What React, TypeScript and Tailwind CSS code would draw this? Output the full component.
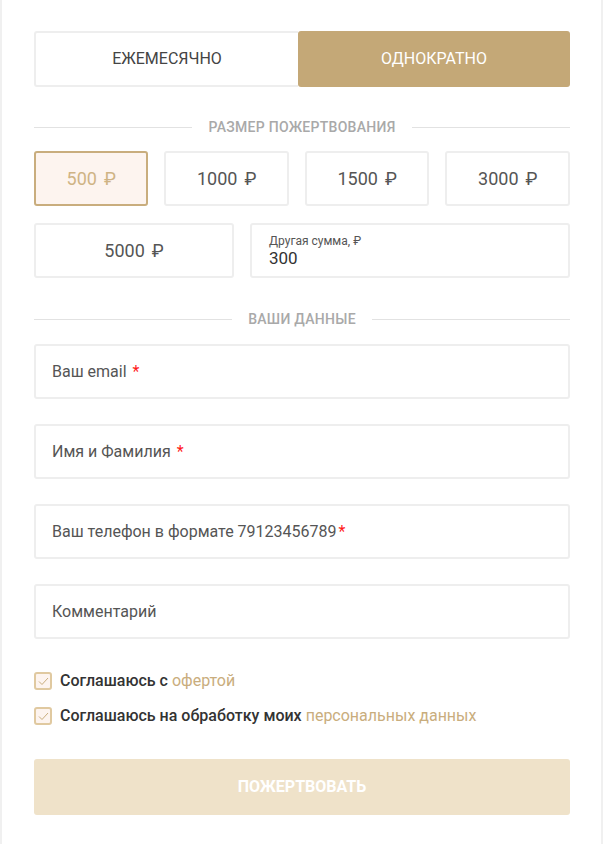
import { useState } from 'react'

function Divider({ label }: { label: string }) {
  return (
    <div className="flex h-5 items-center gap-4">
      <div className="h-px flex-1 bg-[#e2e2e2]" />
      <span className="text-[14px] font-medium uppercase leading-5 tracking-[0.02em] text-[#a9a9a9]">
        {label}
      </span>
      <div className="h-px flex-1 bg-[#e2e2e2]" />
    </div>
  )
}

function Field({ label, required, tight }: { label: string; required?: boolean; tight?: boolean }) {
  return (
    <div className="flex h-[55px] items-center rounded-[3px] border-2 border-[#eeeeee] bg-white px-4 text-[16px] text-[#555]">
      <span>{label}</span>
      {required && (
        <span className={tight ? 'ml-[2px] text-[#ff1a1a]' : 'ml-[6px] text-[#ff1a1a]'}>*</span>
      )}
    </div>
  )
}

function Check({ children }: { children: React.ReactNode }) {
  return (
    <label className="flex h-6 items-center gap-2 text-[16px] font-medium leading-6 text-[#333]">
      <span className="flex h-[18px] w-[18px] items-center justify-center rounded-[3px] border-2 border-[#e0c9a0] bg-[#fdf4ef]">
        <svg width="11" height="9" viewBox="0 0 11 9" fill="none">
          <path d="M1 4.5L4 7.5L10 1" stroke="#c9ad7d" strokeWidth="1" />
        </svg>
      </span>
      <span>{children}</span>
    </label>
  )
}

export default function App() {
  const [mode, setMode] = useState('once')
  const [amount, setAmount] = useState(500)
  const amounts = [500, 1000, 1500, 3000]

  return (
    <div
      className="min-h-[844px] border-x-2 border-[#f0f0f0] bg-white pl-[32px] pr-[31px] pt-[31px] pb-[28px]"
      style={{ fontFamily: 'Roboto, "Noto Sans", sans-serif' }}
    >
      <div className="flex h-[56px] rounded-[3px]">
        <button
          onClick={() => setMode('monthly')}
          className={
            mode === 'monthly'
              ? 'w-[264px] rounded-[3px] bg-[#c4a877] text-[16px] uppercase text-white'
              : 'w-[264px] rounded-l-[3px] border-2 border-r-0 border-[#eeeeee] text-[16px] uppercase text-[#444]'
          }
        >
          Ежемесячно
        </button>
        <button
          onClick={() => setMode('once')}
          className={
            mode === 'once'
              ? 'flex-1 rounded-[3px] bg-[#c4a877] text-[16px] uppercase text-white'
              : 'flex-1 rounded-r-[3px] border-2 border-l-0 border-[#eeeeee] text-[16px] uppercase text-[#444]'
          }
        >
          Однократно
        </button>
      </div>

      <div className="mt-[30px]">
        <Divider label="Размер пожертвования" />
      </div>

      <div className="mt-[14px] flex gap-4">
        {amounts.map((a) => (
          <button
            key={a}
            onClick={() => setAmount(a)}
            className={
              amount === a
                ? 'h-[55px] flex-auto whitespace-nowrap rounded-[3px] border-2 border-[#c9ad7d] bg-[#fdf4ef] text-[18px] text-[#cfb384]'
                : 'h-[55px] flex-auto whitespace-nowrap rounded-[3px] border-2 border-[#eeeeee] bg-white text-[18px] text-[#555]'
            }
          >
            {a}
            <span className="ml-[7px]">₽</span>
          </button>
        ))}
      </div>

      <div className="mt-[17px] flex gap-4">
        <button
          onClick={() => setAmount(5000)}
          className={
            amount === 5000
              ? 'h-[55px] w-[200px] rounded-[3px] border-2 border-[#c9ad7d] bg-[#fdf4ef] text-[18px] text-[#cfb384]'
              : 'h-[55px] w-[200px] rounded-[3px] border-2 border-[#eeeeee] bg-white text-[18px] text-[#555]'
          }
        >
          5000
          <span className="ml-[7px]">₽</span>
        </button>
        <div className="flex h-[55px] flex-1 flex-col justify-center rounded-[3px] border-2 border-[#eeeeee] bg-white px-[17px]">
          <span className="text-[12px] leading-[14px] text-[#555]">Другая сумма, ₽</span>
          <span className="text-[17px] leading-[20px] text-[#333]">300</span>
        </div>
      </div>

      <div className="mt-[31px]">
        <Divider label="Ваши данные" />
      </div>

      <div className="mt-[15px] flex flex-col gap-[25px]">
        <Field label="Ваш email" required />
        <Field label="Имя и Фамилия" required />
        <Field label="Ваш телефон в формате 79123456789" required tight />
        <Field label="Комментарий" />
      </div>

      <div className="mt-[30px] flex flex-col gap-[11px]">
        <Check>
          Соглашаюсь с <span className="font-normal text-[#c9ad7d]">офертой</span>
        </Check>
        <Check>
          Соглашаюсь на обработку моих{' '}
          <span className="font-normal text-[#c9ad7d]">персональных данных</span>
        </Check>
      </div>

      <button className="mt-[31px] h-[56px] w-full rounded-[3px] bg-[#efe2c9] text-[16px] font-bold uppercase text-white">
        Пожертвовать
      </button>
    </div>
  )
}
